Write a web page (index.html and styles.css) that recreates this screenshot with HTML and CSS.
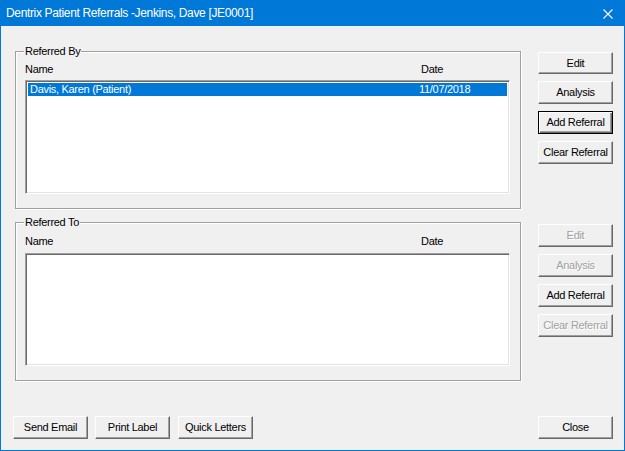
FILE: index.html
```html
<!DOCTYPE html>
<html>
<head>
<meta charset="utf-8">
<link rel="stylesheet" href="styles.css">
</head>
<body>
<div class="window">
  <div class="titlebar">
    <span class="title">Dentrix Patient Referrals -Jenkins, Dave [JE0001]</span>
    <svg class="close-x" width="10" height="10" viewBox="0 0 10 10"><path d="M0.5 0.5 L9.5 9.5 M9.5 0.5 L0.5 9.5" stroke="#fff" stroke-width="1.1" fill="none"/></svg>
  </div>
  <div class="content">
    <div class="row row1">
      <div class="group group1">
        <span class="legend">Referred By</span>
        <div class="header"><span class="col-name">Name</span><span>Date</span></div>
        <div class="list list1">
          <div class="item selected"><span class="item-name">Davis, Karen (Patient)</span><span>11/07/2018</span></div>
        </div>
      </div>
      <div class="btncol btncol1">
        <button class="btn">Edit</button>
        <button class="btn">Analysis</button>
        <button class="btn default">Add Referral</button>
        <button class="btn">Clear Referral</button>
      </div>
    </div>
    <div class="row row2">
      <div class="group group2">
        <span class="legend">Referred To</span>
        <div class="header"><span class="col-name">Name</span><span>Date</span></div>
        <div class="list list2"></div>
      </div>
      <div class="btncol btncol2">
        <button class="btn disabled">Edit</button>
        <button class="btn disabled">Analysis</button>
        <button class="btn">Add Referral</button>
        <button class="btn disabled">Clear Referral</button>
      </div>
    </div>
    <div class="footer">
      <div class="footer-left">
        <button class="btn">Send Email</button>
        <button class="btn">Print Label</button>
        <button class="btn quick">Quick Letters</button>
      </div>
      <button class="btn">Close</button>
    </div>
  </div>
</div>
</body>
</html>
```

FILE: styles.css
```css
* { box-sizing: border-box; }
html, body { margin: 0; padding: 0; background: #f0f0f0; }
body { font-family: "Liberation Sans", Arial, sans-serif; font-size: 11px; color: #000; }

.window {
  width: 625px;
  height: 451px;
  border: 1px solid #0078d7;
  border-top: none;
  background: #f0f0f0;
  display: flex;
  flex-direction: column;
}

.titlebar {
  height: 26px;
  background: #0078d7;
  margin: 0 -1px;
  display: flex;
  align-items: center;
  justify-content: space-between;
  padding: 0 12px 0 6px;
  color: #fff;
}
.title {
  font-family: "Liberation Sans", Arial, sans-serif;
  font-size: 12px;
  letter-spacing: -0.35px;
  line-height: 16px;
}
.close-x { display: block; margin-top: 1px; }

.content {
  flex: 1;
  padding: 0 0 0 14px;
  display: flex;
  flex-direction: column;
}

.row { display: flex; align-items: flex-start; }
.row1 { margin-top: 25px; }
.row2 { margin-top: 13px; }

.group {
  position: relative;
  width: 506px;
  border: 1px solid #a0a0a0;
  box-shadow: inset 1px 1px 0 #fff, 1px 1px 0 #fff;
  padding: 11px 0 0 9px;
}
.group1 { height: 158px; }
.group2 { height: 159px; padding-top: 12px; }

.legend {
  position: absolute;
  top: -7px;
  left: 8px;
  padding: 0 1px 0 1px;
  line-height: 13px;
  background: #f0f0f0;
  letter-spacing: -0.3px;
}

.header {
  display: flex;
  line-height: 13px;
  height: 13px;
  letter-spacing: -0.3px;
}
.col-name { width: 396px; }

.list {
  margin-top: 4px;
  width: 485px;
  background: #fff;
  border: 1px solid;
  border-color: #a0a0a0 #fff #fff #a0a0a0;
  box-shadow: inset 1px 1px 0 #696969, inset -1px -1px 0 #e3e3e3;
  padding: 2px 2px 0 2px;
}
.list1 { height: 114px; }
.list2 { height: 113px; margin-top: 5px; }

.item {
  display: flex;
  height: 13px;
  line-height: 13px;
  padding-left: 2px;
  letter-spacing: -0.3px;
}
.item.selected { background: #0078d7; color: #fff; }
.item-name { width: 389px; }

.btncol {
  margin-left: 17px;
  display: flex;
  flex-direction: column;
  gap: 7px;
}
.btncol1 { padding-top: 0; }
.btncol1 .btn:first-child { margin-top: 1px; height: 22px; }
.btncol2 { padding-top: 2px; gap: 7px; }

.btn {
  width: 75px;
  height: 23px;
  padding: 0;
  margin: 0;
  font-family: "Liberation Sans", Arial, sans-serif;
  font-size: 11px;
  letter-spacing: -0.3px;
  color: #000;
  background: #f0f0f0;
  border: 1px solid;
  border-color: #fff #696969 #696969 #fff;
  box-shadow: inset -1px -1px 0 #a0a0a0;
  text-align: center;
  line-height: 13px;
}
.btn.default {
  border: 1px solid #000;
  box-shadow: inset 1px 1px 0 #fff, inset -1px -1px 0 #696969, inset -2px -2px 0 #a0a0a0;
}
.btn.disabled {
  color: #a0a0a0;
  text-shadow: 1px 1px 0 #fff;
}

.footer {
  margin-top: 35px;
  margin-left: -2px;
  display: flex;
  justify-content: space-between;
  width: 600px;
}
.footer-left { display: flex; gap: 7px; }
.footer-left .quick { margin-left: 1px; }
```
